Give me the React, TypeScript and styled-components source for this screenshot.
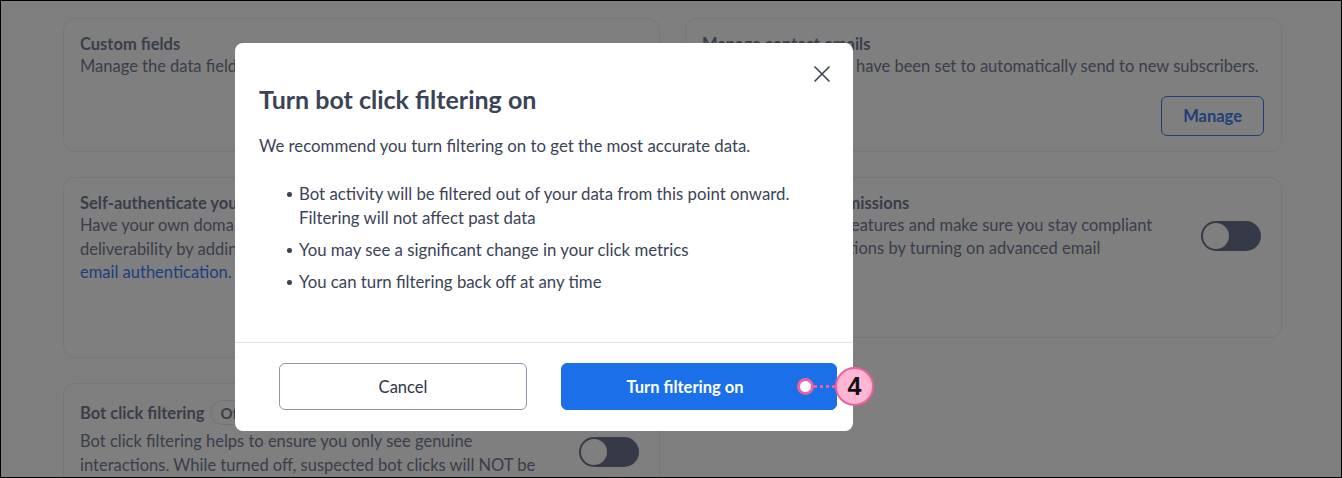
import styled, { createGlobalStyle } from 'styled-components'

const GlobalStyle = createGlobalStyle`
  html, body {
    margin: 0;
    padding: 0;
  }
  body {
    font-family: Lato, "Noto Sans", sans-serif;
  }
  * {
    box-sizing: border-box;
  }
`

const Frame = styled.div`
  position: relative;
  width: 1342px;
  height: 478px;
  border: 1px solid #000;
  overflow: hidden;
  background: #fff;
`

// settings page behind the dialog
const Page = styled.div`
  display: grid;
  grid-template-columns: 597px 597px;
  column-gap: 25px;
  align-items: start;
  padding: 17px 0 0 62px;
  color: #757c94;
`

const Column = styled.div`
  display: flex;
  flex-direction: column;
  gap: 25px;
`

const Card = styled.section<{ $minHeight?: number }>`
  border: 1px solid #eceef3;
  border-radius: 12px;
  padding: 14px 17px 15px 16px;
  min-height: ${p => (p.$minHeight ? `${p.$minHeight}px` : 'auto')};
`

const CardTitle = styled.h3<{ $withPill?: boolean }>`
  display: flex;
  align-items: center;
  gap: 5px;
  margin: ${p => (p.$withPill ? '2px 0 5px' : '0')};
  font-size: 16.5px;
  font-weight: 700;
  line-height: 22px;
`

const StatusPill = styled.span`
  display: inline-flex;
  align-items: center;
  height: 25px;
  padding: 0 10px;
  border: 1px solid #e3e5eb;
  border-radius: 13px;
  font-size: 15px;
  font-weight: 700;
`

const CardText = styled.p<{ $width?: number; $single?: boolean }>`
  margin: 0;
  font-size: 16.5px;
  line-height: 23.5px;
  max-width: ${p => (p.$width ? `${p.$width}px` : 'none')};
  white-space: ${p => (p.$single ? 'nowrap' : 'normal')};
`

const Link = styled.a`
  color: #3e7ef8;
  text-decoration: none;
`

const CardRow = styled.div`
  display: flex;
  justify-content: space-between;
  align-items: flex-start;
  gap: 20px;
`

const CardActions = styled.div`
  display: flex;
  justify-content: flex-end;
  margin-top: 17px;
`

const OutlineButton = styled.button`
  height: 40px;
  padding: 0 21px;
  border: 1.5px solid #3f7ff0;
  border-radius: 6px;
  background: transparent;
  color: #3f7ff0;
  font-family: inherit;
  font-size: 16.5px;
  font-weight: 700;
`

const Toggle = styled.span`
  position: relative;
  flex: none;
  width: 60px;
  height: 30px;
  margin: 7px 3px 0 0;
  border-radius: 15px;
  background: #6b7391;

  &::after {
    content: '';
    position: absolute;
    left: 2px;
    top: 2px;
    width: 26px;
    height: 26px;
    border-radius: 50%;
    background: #fff;
  }
`

// dialog
const Overlay = styled.div`
  position: absolute;
  inset: 0;
  background: rgba(0, 0, 0, 0.5);
`

const Modal = styled.div`
  position: absolute;
  left: 234px;
  top: 42px;
  width: 618px;
  background: #fff;
  border-radius: 8px;
  color: #3b4357;
`

const ModalHeader = styled.div`
  display: flex;
  justify-content: space-between;
  align-items: flex-start;
  padding: 20px 20px 0 24px;
`

const ModalTitle = styled.h2`
  margin: 20px 0 0;
  font-size: 25px;
  font-weight: 700;
  line-height: 32px;
`

const CloseButton = styled.button`
  display: flex;
  align-items: center;
  justify-content: center;
  width: 22px;
  height: 22px;
  padding: 0;
  border: 0;
  background: none;
  color: #3b4357;
`

const ModalBody = styled.div`
  padding: 19px 24px 48px;
  font-size: 16.8px;
  line-height: 24px;
`

const Lead = styled.p`
  margin: 0;
`

const Bullets = styled.ul`
  display: flex;
  flex-direction: column;
  gap: 8px;
  margin: 24px 0 0;
  padding: 0 0 0 40px;
  list-style: none;

  li {
    position: relative;
  }

  li::before {
    content: '';
    position: absolute;
    left: -12px;
    top: 10px;
    width: 4.5px;
    height: 4.5px;
    border-radius: 50%;
    background: #3b4357;
  }
`

const ModalFooter = styled.div`
  display: flex;
  gap: 34px;
  padding: 20px 16px 21px 44px;
  border-top: 1px solid #dfe4ec;
`

const FooterButton = styled.button<{ $primary?: boolean; $width: number }>`
  width: ${p => p.$width}px;
  height: 47px;
  padding: ${p => (p.$primary ? '0 28px 0 0' : '0')};
  border-radius: 6px;
  border: 1px solid ${p => (p.$primary ? '#1b6fe9' : '#8c95ab')};
  background: ${p => (p.$primary ? '#1b6fe9' : '#fff')};
  color: ${p => (p.$primary ? '#fff' : '#2f3546')};
  font-family: inherit;
  font-size: 16.5px;
  font-weight: ${p => (p.$primary ? 700 : 400)};
`

// step marker
const Callout = styled.div`
  position: absolute;
  left: 796px;
  top: 366px;
  display: flex;
  align-items: center;
`

const CalloutRing = styled.span`
  width: 17px;
  height: 17px;
  border: 3px solid #f0609c;
  border-radius: 50%;
  background: #fff;
`

const CalloutLine = styled.span`
  width: 21px;
  height: 3px;
  background: repeating-linear-gradient(90deg, #f0609c 0 3px, transparent 3px 6px);
`

const CalloutBadge = styled.span`
  display: flex;
  align-items: center;
  justify-content: center;
  width: 39px;
  height: 39px;
  border: 2.5px solid #f0609c;
  border-radius: 50%;
  background: #ffb5d4;
  color: #111;
  font-family: "Liberation Sans", Arial, sans-serif;
  font-size: 25px;
  font-weight: 700;
`

export default function App() {
  return (
    <>
      <GlobalStyle />
      <Frame>
        <Page>
          <Column>
            <Card $minHeight={134}>
              <CardTitle>Custom fields</CardTitle>
              <CardText>Manage the data fields you use to store information about your contacts.</CardText>
            </Card>
            <Card $minHeight={181}>
              <CardTitle>Self-authenticate your domain</CardTitle>
              <CardText>
                Have your own domain? Improve your brand recognition and email
                <br />
                deliverability by adding records to your domain, also known as
                <br />
                <Link href="#">email authentication.</Link>
              </CardText>
            </Card>
            <Card>
              <CardTitle $withPill>
                Bot click filtering <StatusPill>Off</StatusPill>
              </CardTitle>
              <CardRow>
                <CardText $width={470}>
                  Bot click filtering helps to ensure you only see genuine interactions. While turned
                  off, suspected bot clicks will NOT be filtered out of your reporting.
                </CardText>
                <Toggle />
              </CardRow>
            </Card>
          </Column>
          <Column>
            <Card>
              <CardTitle>Manage contact emails</CardTitle>
              <CardText $single>Adjust all emails that have been set to automatically send to new subscribers.</CardText>
              <CardActions>
                <OutlineButton>Manage</OutlineButton>
              </CardActions>
            </Card>
            <Card $minHeight={161}>
              <CardTitle>Advanced email permissions</CardTitle>
              <CardRow>
                <CardText>
                  Use powerful email features and make sure you stay compliant
                  <br />
                  under privacy regulations by turning on advanced email
                  <br />
                  permissions.
                </CardText>
                <Toggle />
              </CardRow>
            </Card>
          </Column>
        </Page>

        <Overlay />

        <Modal role="dialog">
          <ModalHeader>
            <ModalTitle>Turn bot click filtering on</ModalTitle>
            <CloseButton aria-label="Close">
              <svg width="18" height="18" viewBox="0 0 18 18" fill="none" stroke="currentColor" strokeWidth="1.6">
                <path d="M1.5 1.5l15 15M16.5 1.5l-15 15" />
              </svg>
            </CloseButton>
          </ModalHeader>
          <ModalBody>
            <Lead>We recommend you turn filtering on to get the most accurate data.</Lead>
            <Bullets>
              <li>
                Bot activity will be filtered out of your data from this point onward.
                <br />
                Filtering will not affect past data
              </li>
              <li>You may see a significant change in your click metrics</li>
              <li>You can turn filtering back off at any time</li>
            </Bullets>
          </ModalBody>
          <ModalFooter>
            <FooterButton $width={248}>Cancel</FooterButton>
            <FooterButton $primary $width={276}>Turn filtering on</FooterButton>
          </ModalFooter>
        </Modal>

        <Callout>
          <CalloutRing />
          <CalloutLine />
          <CalloutBadge>4</CalloutBadge>
        </Callout>
      </Frame>
    </>
  )
}
